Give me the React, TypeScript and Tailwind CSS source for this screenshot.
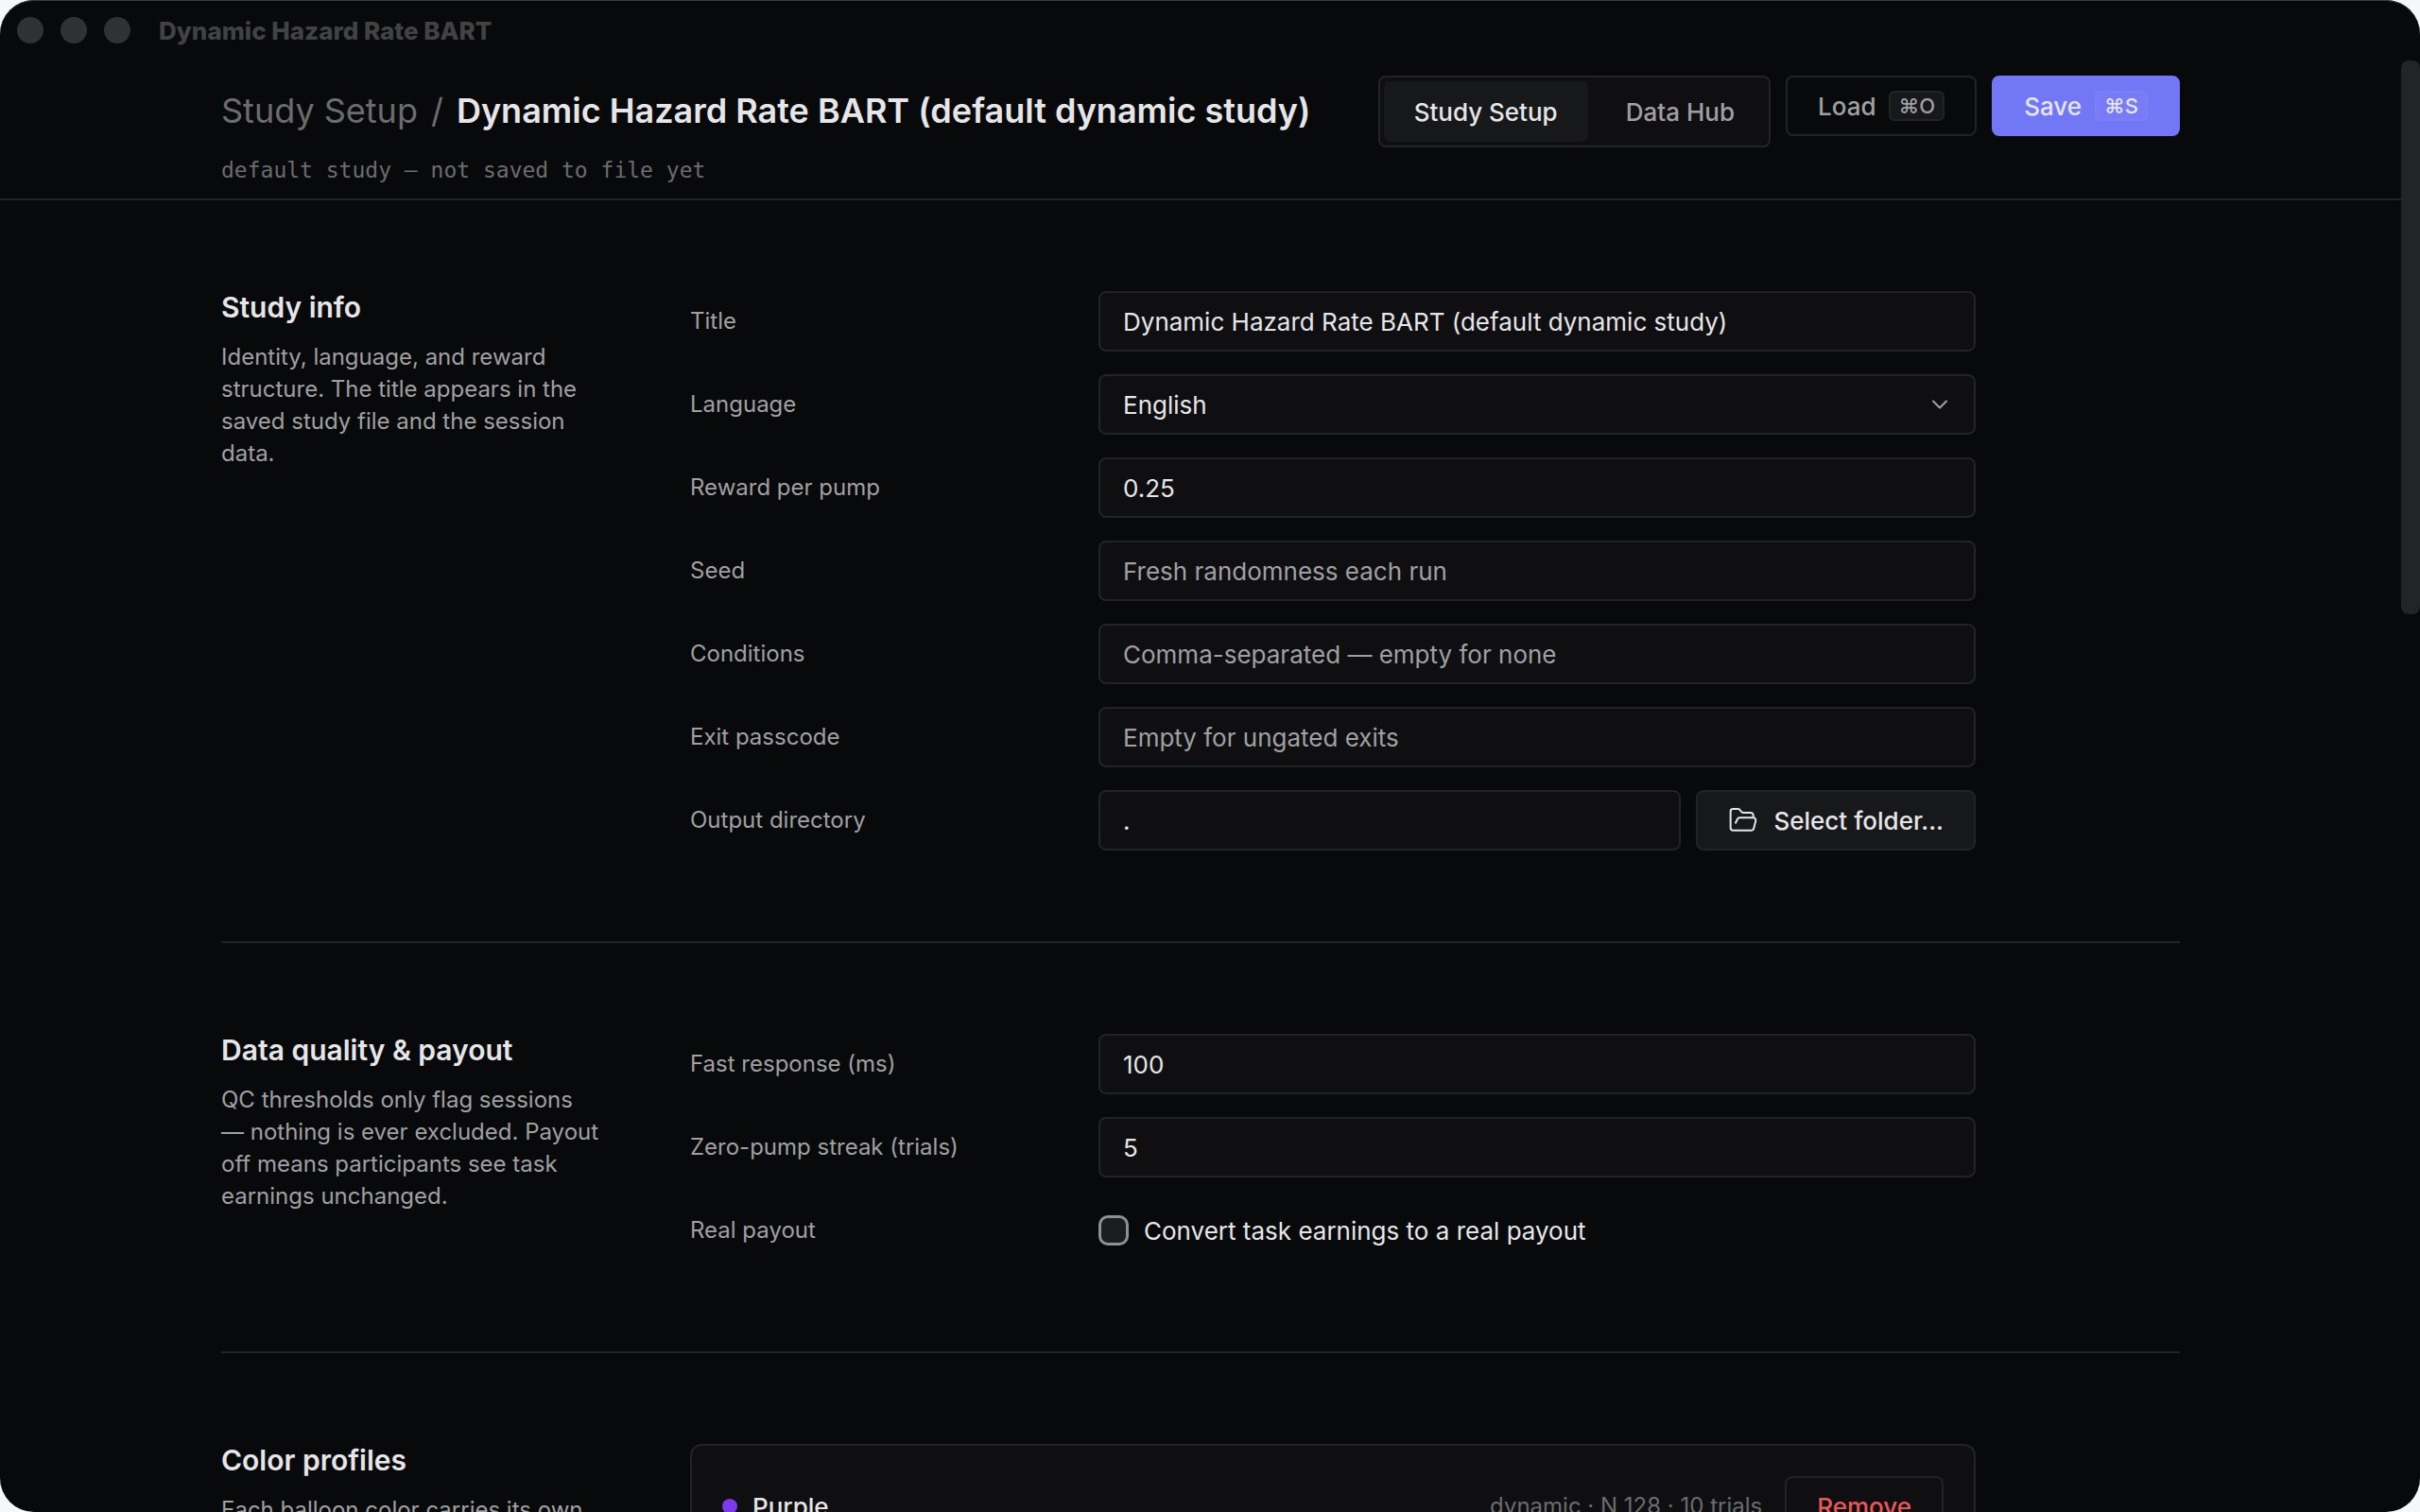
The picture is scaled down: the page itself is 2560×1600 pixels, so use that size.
import React, { useState } from 'react';
import { ChevronDown, FolderOpen } from 'lucide-react';

const inputClass =
  'h-16 w-full min-w-0 rounded-lg border-2 border-[#222326] bg-[#0f0f11] px-6 text-[26px] text-[#e6e6e8] outline-none placeholder:text-[#a0a0a2] placeholder:opacity-100 focus:border-[#7277f6]';

interface FieldProps {
  id: string;
  label: string;
  children: React.ReactNode;
}

function Field({ id, label, children }: FieldProps) {
  return (
    <div className="grid grid-cols-[400px_minmax(0,1fr)] items-center gap-8">
      <label htmlFor={id} className="text-2xl leading-[34px] text-[#a0a0a2]">
        {label}
      </label>
      {children}
    </div>
  );
}

interface SectionProps {
  title: string;
  description: string;
  last?: boolean;
  children: React.ReactNode;
}

function Section({ title, description, last = false, children }: SectionProps) {
  return (
    <section
      className={`grid grid-cols-[400px_minmax(0,1fr)] gap-24 py-24 ${last ? '' : 'border-b-2 border-[#222326]'}`}
    >
      <div>
        <h2 className="text-[30px] leading-[34px] font-semibold text-[#e6e6e8]">{title}</h2>
        <p className="mt-[19px] text-2xl leading-[34px] text-[#a0a0a2]">{description}</p>
      </div>
      <div className="flex max-w-[1360px] flex-col gap-6">{children}</div>
    </section>
  );
}

function TitleBar() {
  return (
    <div className="flex h-16 shrink-0 items-center px-[18px]">
      <div className="flex gap-[18px]">
        <span className="size-7 rounded-full bg-[#303133]"></span>
        <span className="size-7 rounded-full bg-[#303133]"></span>
        <span className="size-7 rounded-full bg-[#303133]"></span>
      </div>
      <span className="ml-[30px] text-[26px] font-extrabold text-[#414244]">Dynamic Hazard Rate BART</span>
    </div>
  );
}

function Header({ title }: { title: string }) {
  const [tab, setTab] = useState('setup');

  const tabClass = (name: string) =>
    `h-16 rounded-md px-8 text-[26px] font-medium ${
      tab === name ? 'bg-[#17181a] text-[#e6e6e8]' : 'text-[#a0a0a2]'
    }`;

  return (
    <header className="border-b-2 border-[#222326]">
      <div className="mx-auto flex max-w-[2200px] items-start justify-between gap-8 px-16 pt-4 pb-[14px]">
        <div className="min-w-0 pt-4">
          <h1 className="flex gap-[14px] text-4xl leading-[42px] whitespace-nowrap">
            <span className="text-[#6b6c6e]">Study Setup</span>
            <span className="text-[#6b6c6e]">/</span>
            <span className="font-semibold text-[#e6e6e8]">{title}</span>
          </h1>
          <p className="mt-[26px] font-['DejaVu_Sans_Mono',monospace] text-[23px] leading-8 text-[#6b6c6e]">
            default study — not saved to file yet
          </p>
        </div>

        <div className="flex shrink-0 items-start gap-4">
          <div className="flex gap-2 rounded-lg border-2 border-[#222326] bg-[#0f0f11] p-1">
            <button type="button" className={tabClass('setup')} onClick={() => setTab('setup')}>
              Study Setup
            </button>
            <button type="button" className={tabClass('data')} onClick={() => setTab('data')}>
              Data Hub
            </button>
          </div>
          <button
            type="button"
            className="flex h-16 items-center gap-[14px] rounded-lg border-2 border-[#222326] px-8 text-[26px] font-medium text-[#a0a0a2]"
          >
            Load
            <kbd className="flex h-8 items-center rounded-md border-2 border-[#222326] bg-[#17181a] px-2 font-[Inter,sans-serif] text-[22px]">
              ⌘O
            </kbd>
          </button>
          <button
            type="button"
            className="flex h-16 items-center gap-[14px] rounded-lg border-2 border-[#7277f6] bg-[#7277f6] px-8 text-[26px] font-medium text-[#e6e6e8]"
          >
            Save
            <kbd className="flex h-8 items-center rounded-md border-2 border-[#7b80f7] bg-[#777cf6] px-2 font-[Inter,sans-serif] text-[22px]">
              ⌘S
            </kbd>
          </button>
        </div>
      </div>
    </header>
  );
}

export default function App() {
  const [title, setTitle] = useState('Dynamic Hazard Rate BART (default dynamic study)');
  const [payout, setPayout] = useState(false);

  return (
    <div className="h-screen bg-[#f6f7f8] font-[Inter,sans-serif]">
      <div className="flex h-full flex-col overflow-hidden rounded-[36px] bg-[#08090a] shadow-[inset_0_1px_0_#3a3b3d]">
        <TitleBar />

        <div className="flex min-h-0 flex-1">
          <div className="min-w-0 flex-1 overflow-hidden">
            <Header title={title} />

            <main className="mx-auto max-w-[2200px] px-16">
              <Section
                title="Study info"
                description="Identity, language, and reward structure. The title appears in the saved study file and the session data."
              >
                <Field id="title" label="Title">
                  <input id="title" className={inputClass} value={title} onChange={(e) => setTitle(e.target.value)} />
                </Field>
                <Field id="language" label="Language">
                  <div className="relative">
                    <select id="language" className={`${inputClass} appearance-none`} defaultValue="en">
                      <option value="en">English</option>
                      <option value="de">Deutsch</option>
                    </select>
                    <ChevronDown
                      size={28}
                      strokeWidth={1.75}
                      className="pointer-events-none absolute top-[18px] right-6 text-[#a0a0a2]"
                    />
                  </div>
                </Field>
                <Field id="reward" label="Reward per pump">
                  <input id="reward" className={inputClass} defaultValue="0.25" />
                </Field>
                <Field id="seed" label="Seed">
                  <input id="seed" className={inputClass} placeholder="Fresh randomness each run" />
                </Field>
                <Field id="conditions" label="Conditions">
                  <input id="conditions" className={inputClass} placeholder="Comma-separated — empty for none" />
                </Field>
                <Field id="passcode" label="Exit passcode">
                  <input id="passcode" className={inputClass} placeholder="Empty for ungated exits" />
                </Field>
                <Field id="output" label="Output directory">
                  <div className="flex gap-4">
                    <input id="output" className={inputClass} defaultValue="." />
                    <button
                      type="button"
                      className="flex h-16 shrink-0 items-center gap-4 rounded-lg border-2 border-[#222326] bg-[#17181a] px-8 text-[26px] font-medium text-[#e6e6e8]"
                    >
                      <FolderOpen size={32} strokeWidth={1.5} />
                      Select folder...
                    </button>
                  </div>
                </Field>
              </Section>

              <Section
                title="Data quality & payout"
                description="QC thresholds only flag sessions — nothing is ever excluded. Payout off means participants see task earnings unchanged."
              >
                <Field id="fast" label="Fast response (ms)">
                  <input id="fast" className={inputClass} defaultValue="100" />
                </Field>
                <Field id="streak" label="Zero-pump streak (trials)">
                  <input id="streak" className={inputClass} defaultValue="5" />
                </Field>
                <Field id="payout" label="Real payout">
                  <label className="flex h-16 items-center gap-4 text-[26px] text-[#e6e6e8]">
                    <input
                      id="payout"
                      type="checkbox"
                      className="size-8 appearance-none rounded-[10px] border-3 border-[#8f9092] bg-[#1c1d1f] checked:bg-[#7277f6]"
                      checked={payout}
                      onChange={(e) => setPayout(e.target.checked)}
                    />
                    Convert task earnings to a real payout
                  </label>
                </Field>
              </Section>

              <Section
                title="Color profiles"
                description="Each balloon color carries its own hazard and trial count."
                last
              >
                <div className="flex items-center rounded-xl border-2 border-[#222326] bg-[#0f0f11] p-8">
                  <span className="mr-4 size-4 rounded-full bg-[#7c3aed]"></span>
                  <span className="text-[26px] font-medium text-[#e6e6e8]">Purple</span>
                  <span className="mr-6 ml-auto text-2xl text-[#6b6c6e]">dynamic · N 128 · 10 trials</span>
                  <button
                    type="button"
                    className="h-16 rounded-lg border-2 border-[#222326] px-8 text-[26px] font-medium text-[#eb5757]"
                  >
                    Remove
                  </button>
                </div>
              </Section>
            </main>
          </div>

          <div className="w-5 shrink-0">
            <div className="h-[586px] rounded-lg bg-[#232426]"></div>
          </div>
        </div>
      </div>
    </div>
  );
}
